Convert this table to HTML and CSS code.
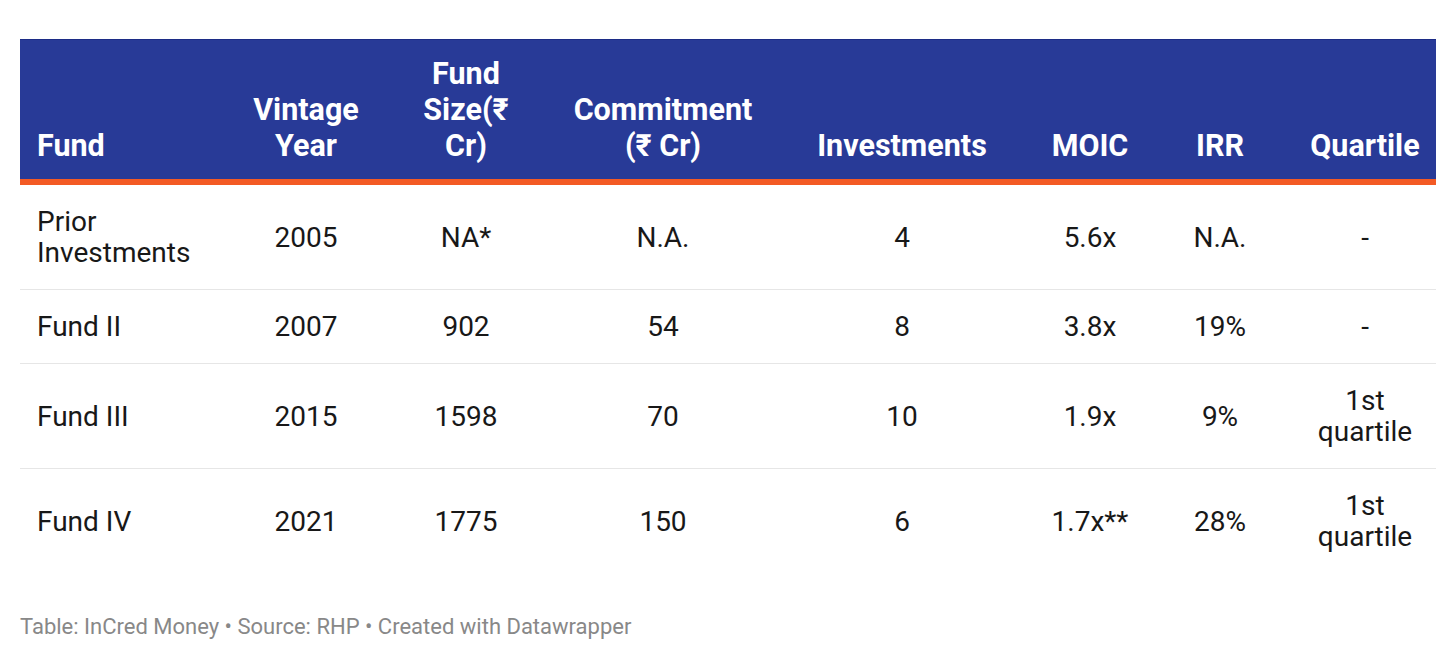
FILE: index.html
```html
<!DOCTYPE html>
<html>
<head>
<meta charset="utf-8">
<link rel="stylesheet" href="styles.css">
</head>
<body>
<div class="wrap">
  <table class="tbl">
    <colgroup>
      <col class="c1"><col class="c2"><col class="c3"><col class="c4"><col class="c5"><col class="c6"><col class="c7"><col class="c8">
    </colgroup>
    <thead>
      <tr>
        <th class="left">Fund</th>
        <th>Vintage<br>Year</th>
        <th>Fund<br>Size(₹<br>Cr)</th>
        <th>Commitment<br>(₹ Cr)</th>
        <th>Investments</th>
        <th>MOIC</th>
        <th>IRR</th>
        <th>Quartile</th>
      </tr>
    </thead>
    <tbody>
      <tr>
        <td class="left">Prior<br>Investments</td>
        <td>2005</td><td>NA*</td><td>N.A.</td><td>4</td><td>5.6x</td><td>N.A.</td><td>-</td>
      </tr>
      <tr>
        <td class="left">Fund II</td>
        <td>2007</td><td>902</td><td>54</td><td>8</td><td>3.8x</td><td>19%</td><td>-</td>
      </tr>
      <tr>
        <td class="left">Fund III</td>
        <td>2015</td><td>1598</td><td>70</td><td>10</td><td>1.9x</td><td>9%</td><td>1st<br>quartile</td>
      </tr>
      <tr class="last">
        <td class="left">Fund IV</td>
        <td>2021</td><td>1775</td><td>150</td><td>6</td><td>1.7x**</td><td>28%</td><td>1st<br>quartile</td>
      </tr>
    </tbody>
  </table>
  <div class="notes">Table: InCred Money • Source: RHP • Created with Datawrapper</div>
</div>
</body>
</html>
```

FILE: styles.css
```css
html, body {
  margin: 0;
  padding: 0;
  background: #ffffff;
}
body {
  font-family: Roboto, "Liberation Sans", sans-serif;
  color: #181818;
}
.wrap {
  padding: 39px 20px 0 20px;
}
.tbl {
  width: 1416px;
  border-collapse: collapse;
  table-layout: fixed;
  border-top: 1px solid #e4e4e4;
}
.c1 { width: 216px; }
.c2 { width: 140px; }
.c3 { width: 180px; }
.c4 { width: 214px; }
.c5 { width: 264px; }
.c6 { width: 112px; }
.c7 { width: 148px; }
.c8 { width: 142px; }
.tbl th {
  background: #283a97;
  color: #ffffff;
  font-weight: 700;
  font-size: 30.5px;
  line-height: 36px;
  text-align: center;
  vertical-align: bottom;
  padding: 16px 0 15px 0;
  white-space: nowrap;
  border-top: 1px solid #1c2c86;
  border-bottom: 6px solid #f35a24;
}
.tbl td {
  font-size: 28px;
  line-height: 31px;
  text-align: center;
  vertical-align: middle;
  padding: 21px 0;
  white-space: nowrap;
  border-bottom: 1px solid #e6e6e6;
}
.tbl tr.last td {
  border-bottom: none;
}
.tbl .left {
  text-align: left;
  padding-left: 17px;
}
.notes {
  margin-top: 41px;
  font-size: 22px;
  line-height: 26px;
  color: #888888;
}
```
